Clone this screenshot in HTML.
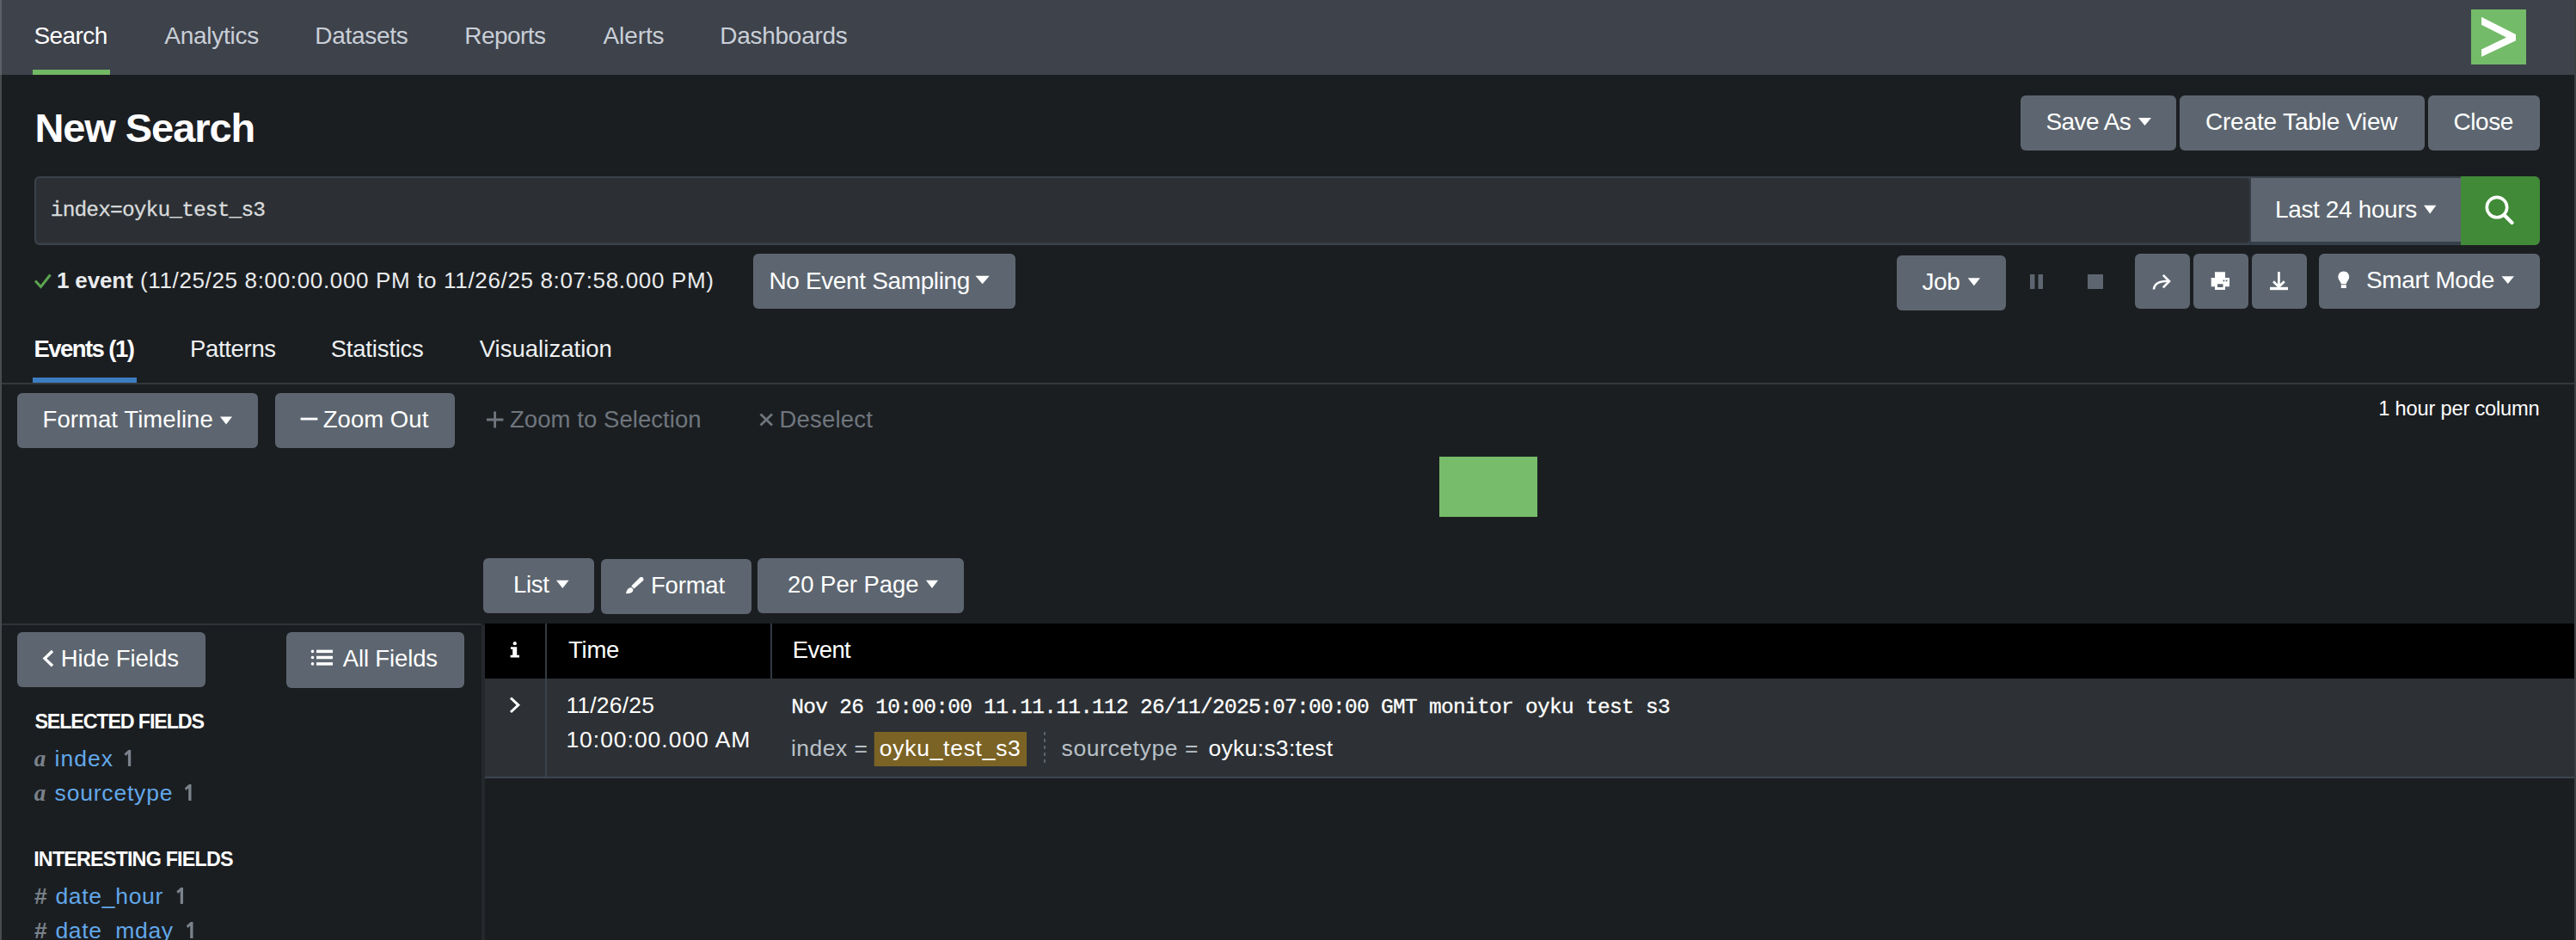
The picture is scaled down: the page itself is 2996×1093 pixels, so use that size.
<!DOCTYPE html>
<html><head><meta charset="utf-8"><title>New Search</title>
<style>html,body{margin:0;padding:0;width:2996px;height:1093px;overflow:hidden;background:#1b1e21;font-family:"Liberation Sans",sans-serif;}</style>
</head><body>
<svg width="2996" height="1093" viewBox="0 0 2996 1093" style="display:block"><rect x="0" y="0" width="2996" height="1093" fill="#1b1e21"/>
<rect x="0" y="0" width="2996" height="87" fill="#3e424b"/>
<rect x="0" y="0" width="2" height="87" fill="#5b6067"/>
<rect x="0" y="87" width="2" height="1006" fill="#474b4e"/>
<rect x="2994" y="0" width="2" height="1093" fill="#3d4043"/>
<text x="39.40" y="51" font-family="Liberation Sans" font-size="28" font-weight="400" fill="#ffffff" textLength="85.82" lengthAdjust="spacing" xml:space="preserve">Search</text>
<text x="191.20" y="51" font-family="Liberation Sans" font-size="28" font-weight="400" fill="#c9cfd7" textLength="110.05" lengthAdjust="spacing" xml:space="preserve">Analytics</text>
<text x="366.30" y="51" font-family="Liberation Sans" font-size="28" font-weight="400" fill="#c9cfd7" textLength="108.50" lengthAdjust="spacing" xml:space="preserve">Datasets</text>
<text x="540.30" y="51" font-family="Liberation Sans" font-size="28" font-weight="400" fill="#c9cfd7" textLength="94.75" lengthAdjust="spacing" xml:space="preserve">Reports</text>
<text x="701.40" y="51" font-family="Liberation Sans" font-size="28" font-weight="400" fill="#c9cfd7" textLength="71.18" lengthAdjust="spacing" xml:space="preserve">Alerts</text>
<text x="837.30" y="51" font-family="Liberation Sans" font-size="28" font-weight="400" fill="#c9cfd7" textLength="148.48" lengthAdjust="spacing" xml:space="preserve">Dashboards</text>
<rect x="38" y="81" width="90" height="6" fill="#72b965"/>
<rect x="2874" y="11" width="64" height="64" fill="#74bb69"/>
<path d="M2886,19.7 L2926,39.9 L2926,47.3 L2886,66 L2886,57.4 L2915,43.5 L2886,28.7 Z" fill="#fff"/>
<text x="40.40" y="165" font-family="Liberation Sans" font-size="47" font-weight="700" fill="#ffffff" textLength="256.87" lengthAdjust="spacing" xml:space="preserve">New Search</text>
<rect x="2350" y="111" width="181" height="64" fill="#5d6670" rx="6"/>
<text x="2379.50" y="151" font-family="Liberation Sans" font-size="28" font-weight="400" fill="#ffffff" textLength="99.23" lengthAdjust="spacing" xml:space="preserve">Save As</text>
<polygon points="2487,137 2502,137 2494.5,146" fill="#fff"/>
<rect x="2535" y="111" width="285" height="64" fill="#5d6670" rx="6"/>
<text x="2564.90" y="151" font-family="Liberation Sans" font-size="28" font-weight="400" fill="#ffffff" textLength="223.62" lengthAdjust="spacing" xml:space="preserve">Create Table View</text>
<rect x="2824" y="111" width="130" height="64" fill="#5d6670" rx="6"/>
<text x="2853.50" y="151" font-family="Liberation Sans" font-size="28" font-weight="400" fill="#ffffff" textLength="69.89" lengthAdjust="spacing" xml:space="preserve">Close</text>
<rect x="40" y="205" width="2914" height="80" fill="#39424a" rx="6"/>
<rect x="42" y="207" width="2574" height="75.5" fill="#2c3034" rx="4"/>
<rect x="2616" y="207" width="2" height="78" fill="#343b45"/>
<rect x="2618" y="281" width="244" height="4" fill="#36404a"/>
<rect x="2618" y="207" width="244" height="74" fill="#5d6670"/>
<path d="M2862,205 H2948 A6,6 0 0 1 2954,211 V279 A6,6 0 0 1 2948,285 H2862 Z" fill="#418a38"/>
<text x="58.80" y="251" font-family="Liberation Mono" font-size="24.5" font-weight="400" stroke="#d8dadc" stroke-width="0.3" fill="#d8dadc" textLength="250.16" lengthAdjust="spacing" xml:space="preserve">index=oyku_test_s3</text>
<text x="2646.00" y="253" font-family="Liberation Sans" font-size="28" font-weight="400" fill="#ffffff" textLength="165.27" lengthAdjust="spacing" xml:space="preserve">Last 24 hours</text>
<polygon points="2819,238.8 2833.4,238.8 2826.2,248.5" fill="#fff"/>
<circle cx="2904" cy="241.1" r="11.7" fill="none" stroke="#fff" stroke-width="3.6"/>
<path d="M2912.5,250 L2921.5,259" fill="none" stroke="#fff" stroke-width="4.2" stroke-linecap="round"/>
<path d="M41,326.5 L47.5,333.5 L58.5,319.5" fill="none" stroke="#5ba550" stroke-width="3"/>
<text x="65.90" y="335" font-family="Liberation Sans" font-size="26" font-weight="700" fill="#e9ebed" textLength="88.91" lengthAdjust="spacing" xml:space="preserve">1 event</text>
<text x="162.90" y="335" font-family="Liberation Sans" font-size="26" font-weight="400" fill="#e9ebed" textLength="667.01" lengthAdjust="spacing" xml:space="preserve">(11/25/25 8:00:00.000 PM to 11/26/25 8:07:58.000 PM)</text>
<rect x="876" y="295" width="305" height="64" fill="#5d6670" rx="6"/>
<text x="894.40" y="336" font-family="Liberation Sans" font-size="28" font-weight="400" fill="#ffffff" textLength="233.99" lengthAdjust="spacing" xml:space="preserve">No Event Sampling</text>
<polygon points="1134.5,320.8 1150.8,320.8 1142.65,330.3" fill="#fff"/>
<rect x="2206" y="297" width="127" height="64" fill="#5d6670" rx="6"/>
<text x="2235.50" y="337" font-family="Liberation Sans" font-size="28" font-weight="400" fill="#ffffff" textLength="44.26" lengthAdjust="spacing" xml:space="preserve">Job</text>
<polygon points="2288.7,323.3 2303,323.3 2295.85,332.2" fill="#fff"/>
<rect x="2361" y="319" width="5.5" height="17" fill="#5d6670"/>
<rect x="2370.5" y="319" width="5.5" height="17" fill="#5d6670"/>
<rect x="2428" y="319" width="18" height="17" fill="#5d6670"/>
<rect x="2483" y="295" width="64" height="64" fill="#5d6670" rx="6"/>
<path d="M2505,336.5 C2505.5,329.5 2511,326.8 2522,326.8" fill="none" stroke="#fff" stroke-width="2.6"/>
<path d="M2515.8,319.8 L2523,327 L2515.8,334.3" fill="none" stroke="#fff" stroke-width="2.6"/>
<rect x="2551" y="295" width="64" height="64" fill="#5d6670" rx="6"/>
<path d="M2576,316.2 H2588 V323 H2593 V333.2 H2588 V337 H2576 V333.2 H2571.7 V323 H2576 Z" fill="#fff"/>
<rect x="2579" y="330.2" width="6.5" height="3.8" fill="#5d6670"/>
<rect x="2585.5" y="325.5" width="1.8" height="1.8" fill="#5d6670"/>
<rect x="2588.6" y="325.5" width="1.8" height="1.8" fill="#5d6670"/>
<rect x="2619" y="295" width="64" height="64" fill="#5d6670" rx="6"/>
<path d="M2650.4,316 V333" fill="none" stroke="#fff" stroke-width="2.8"/>
<path d="M2644,327.3 L2650.4,333.6 L2656.8,327.3" fill="none" stroke="#fff" stroke-width="2.8"/>
<rect x="2640" y="333.8" width="21" height="3.4" fill="#fff"/>
<rect x="2697" y="295" width="257" height="64" fill="#5d6670" rx="6"/>
<path d="M2725.8,315.6 C2729.6,315.6 2732.2,318.4 2732.2,322 C2732.2,325.6 2729.4,327 2728.8,330.2 H2722.8 C2722.2,327 2719.4,325.6 2719.4,322 C2719.4,318.4 2722,315.6 2725.8,315.6 Z" fill="#fff"/>
<rect x="2722.8" y="331.2" width="6.0" height="3.8" fill="#fff"/>
<text x="2752.00" y="335" font-family="Liberation Sans" font-size="28" font-weight="400" fill="#ffffff" textLength="149.40" lengthAdjust="spacing" xml:space="preserve">Smart Mode</text>
<polygon points="2909.5,321.2 2924,321.2 2916.75,330.1" fill="#fff"/>
<text x="39.40" y="415" font-family="Liberation Sans" font-size="27.5" font-weight="700" fill="#ffffff" textLength="117.44" lengthAdjust="spacing" xml:space="preserve">Events (1)</text>
<text x="221.00" y="415" font-family="Liberation Sans" font-size="27.5" font-weight="400" fill="#eef0f2" textLength="100.12" lengthAdjust="spacing" xml:space="preserve">Patterns</text>
<text x="384.70" y="415" font-family="Liberation Sans" font-size="27.5" font-weight="400" fill="#eef0f2" textLength="108.13" lengthAdjust="spacing" xml:space="preserve">Statistics</text>
<text x="557.70" y="415" font-family="Liberation Sans" font-size="27.5" font-weight="400" fill="#eef0f2" textLength="154.21" lengthAdjust="spacing" xml:space="preserve">Visualization</text>
<rect x="2" y="445" width="2992" height="2" fill="#34383c"/>
<rect x="38" y="439" width="121" height="6" fill="#3c7dc2"/>
<rect x="20" y="457" width="280" height="64" fill="#5d6670" rx="6"/>
<text x="49.50" y="497" font-family="Liberation Sans" font-size="27.5" font-weight="400" fill="#ffffff" textLength="198.24" lengthAdjust="spacing" xml:space="preserve">Format Timeline</text>
<polygon points="256,484.5 270,484.5 263.0,493.5" fill="#fff"/>
<rect x="320" y="457" width="209" height="64" fill="#5d6670" rx="6"/>
<rect x="349.6" y="485.7" width="19.8" height="2.8" fill="#fff"/>
<text x="375.70" y="497" font-family="Liberation Sans" font-size="27.5" font-weight="400" fill="#ffffff" textLength="122.57" lengthAdjust="spacing" xml:space="preserve">Zoom Out</text>
<path d="M575.6,478.5 V497.5 M565.9,488 H585.4" fill="none" stroke="#6f767e" stroke-width="2.8"/>
<text x="593.00" y="497" font-family="Liberation Sans" font-size="27.5" font-weight="400" fill="#6f767e" textLength="222.64" lengthAdjust="spacing" xml:space="preserve">Zoom to Selection</text>
<path d="M884.5,481.5 L898,494.5 M898,481.5 L884.5,494.5" fill="none" stroke="#6f767e" stroke-width="2.8"/>
<text x="906.40" y="497" font-family="Liberation Sans" font-size="27.5" font-weight="400" fill="#6f767e" textLength="108.40" lengthAdjust="spacing" xml:space="preserve">Deselect</text>
<text x="2766.20" y="483" font-family="Liberation Sans" font-size="23.7" font-weight="400" fill="#ffffff" textLength="187.54" lengthAdjust="spacing" xml:space="preserve">1 hour per column</text>
<rect x="1674" y="531" width="114" height="70" fill="#76bc6a"/>
<rect x="562" y="649" width="129" height="64" fill="#5d6670" rx="6"/>
<text x="597.00" y="689" font-family="Liberation Sans" font-size="27.5" font-weight="400" fill="#ffffff" textLength="41.80" lengthAdjust="spacing" xml:space="preserve">List</text>
<polygon points="647,674.7 661.6,674.7 654.3,684" fill="#fff"/>
<rect x="699" y="650" width="175" height="64" fill="#5d6670" rx="6"/>
<path d="M744.2,671.6 C745.8,670.6 747.6,671.2 748.2,672.4 C748.8,673.6 748.4,674.8 747.6,675.6 L737.4,684.6 L734.2,681.6 Z" fill="#fff"/>
<path d="M728,690 C728.8,686.6 730.4,683.4 733.6,683.2 C736.2,683.2 737,686 735.8,687.8 C734.4,690 731,690.4 728,690 Z" fill="#fff"/>
<text x="757.00" y="690" font-family="Liberation Sans" font-size="27.5" font-weight="400" fill="#ffffff" textLength="86.09" lengthAdjust="spacing" xml:space="preserve">Format</text>
<rect x="881" y="649" width="240" height="64" fill="#5d6670" rx="6"/>
<text x="916.00" y="689" font-family="Liberation Sans" font-size="27.5" font-weight="400" fill="#ffffff" textLength="152.49" lengthAdjust="spacing" xml:space="preserve">20 Per Page</text>
<polygon points="1077,674.7 1091,674.7 1084.0,684" fill="#fff"/>
<rect x="2" y="725" width="558" height="2" fill="#2f3337"/>
<rect x="560" y="727" width="4" height="366" fill="#25292d"/>
<rect x="20" y="735" width="219" height="64" fill="#5d6670" rx="6"/>
<path d="M61,757 L52,765.6 L61,774.3" fill="none" stroke="#fff" stroke-width="3.4"/>
<text x="70.70" y="775" font-family="Liberation Sans" font-size="27.5" font-weight="400" fill="#ffffff" textLength="137.26" lengthAdjust="spacing" xml:space="preserve">Hide Fields</text>
<rect x="333" y="735" width="207" height="65" fill="#5d6670" rx="6"/>
<circle cx="363.5" cy="757.4" r="1.8" fill="#fff"/>
<rect x="368" y="755.65" width="19" height="3.5" fill="#fff"/>
<circle cx="363.5" cy="764.5" r="1.8" fill="#fff"/>
<rect x="368" y="762.75" width="19" height="3.5" fill="#fff"/>
<circle cx="363.5" cy="771.9" r="1.8" fill="#fff"/>
<rect x="368" y="770.15" width="19" height="3.5" fill="#fff"/>
<text x="398.70" y="775" font-family="Liberation Sans" font-size="27.5" font-weight="400" fill="#ffffff" textLength="110.36" lengthAdjust="spacing" xml:space="preserve">All Fields</text>
<text x="40.40" y="847" font-family="Liberation Sans" font-size="23.3" font-weight="700" fill="#ffffff" textLength="197.58" lengthAdjust="spacing" xml:space="preserve">SELECTED FIELDS</text>
<text x="39.70" y="890.5" font-family="Liberation Serif" font-size="27" font-weight="700" font-style="italic" fill="#7a828b" xml:space="preserve">a</text>
<text x="63.60" y="890.5" font-family="Liberation Sans" font-size="26.5" font-weight="400" fill="#62a8ea" textLength="67.46" lengthAdjust="spacing" xml:space="preserve">index</text>
<text x="39.70" y="930.6" font-family="Liberation Serif" font-size="27" font-weight="700" font-style="italic" fill="#7a828b" xml:space="preserve">a</text>
<text x="63.60" y="930.6" font-family="Liberation Sans" font-size="26.5" font-weight="400" fill="#62a8ea" textLength="136.84" lengthAdjust="spacing" xml:space="preserve">sourcetype</text>
<text x="39.20" y="1007.4" font-family="Liberation Sans" font-size="23.3" font-weight="700" fill="#ffffff" textLength="232.24" lengthAdjust="spacing" xml:space="preserve">INTERESTING FIELDS</text>
<text x="40.00" y="1051" font-family="Liberation Sans" font-size="26.5" font-weight="700" fill="#7a828b" xml:space="preserve">#</text>
<text x="64.40" y="1051" font-family="Liberation Sans" font-size="26.5" font-weight="400" fill="#62a8ea" textLength="124.96" lengthAdjust="spacing" xml:space="preserve">date_hour</text>
<text x="40.00" y="1091" font-family="Liberation Sans" font-size="26.5" font-weight="700" fill="#7a828b" xml:space="preserve">#</text>
<text x="64.40" y="1091" font-family="Liberation Sans" font-size="26.5" font-weight="400" fill="#62a8ea" textLength="136.72" lengthAdjust="spacing" xml:space="preserve">date_mday</text>
<path d="M152.2,871.9 V891 H148.89999999999998 V876.5 L146.29999999999998,879.0 L144.5,876.6 L149.5,871.9 Z" fill="#7a828b"/>
<path d="M222.5,911.9 V931 H219.2 V916.5 L216.6,919.0 L214.8,916.6 L219.8,911.9 Z" fill="#7a828b"/>
<path d="M213,1031.9 V1051 H209.7 V1036.5 L207.1,1039.0 L205.3,1036.6000000000001 L210.3,1031.9 Z" fill="#7a828b"/>
<path d="M224.5,1071.9 V1091 H221.2 V1076.5 L218.6,1079.0 L216.8,1076.6000000000001 L221.8,1071.9 Z" fill="#7a828b"/>
<rect x="564" y="725" width="2430" height="64" fill="#000"/>
<rect x="634" y="725" width="2" height="64" fill="#313a43"/>
<rect x="896" y="725" width="2" height="64" fill="#313a43"/>
<rect x="564" y="789" width="2430" height="114" fill="#2d3135"/>
<rect x="634" y="789" width="2" height="114" fill="#38434d"/>
<rect x="564" y="903" width="2430" height="2" fill="#3b4650"/>
<circle cx="598.8" cy="748.2" r="2.1" fill="#fff"/>
<path d="M594,752.3 H601.2 V761.8 H604 V764.6 H593.6 V761.8 H596.2 V755 H594 Z" fill="#fff"/>
<text x="661.00" y="765" font-family="Liberation Sans" font-size="27.5" font-weight="400" fill="#ffffff" textLength="59.39" lengthAdjust="spacing" xml:space="preserve">Time</text>
<text x="921.80" y="765" font-family="Liberation Sans" font-size="27.5" font-weight="400" fill="#ffffff" textLength="67.93" lengthAdjust="spacing" xml:space="preserve">Event</text>
<path d="M594,811.5 L602.8,819.8 L594,828" fill="none" stroke="#fff" stroke-width="3"/>
<text x="658.40" y="829" font-family="Liberation Sans" font-size="26.5" font-weight="400" fill="#ffffff" textLength="102.49" lengthAdjust="spacing" xml:space="preserve">11/26/25</text>
<text x="658.40" y="869" font-family="Liberation Sans" font-size="26.5" font-weight="400" fill="#ffffff" textLength="213.99" lengthAdjust="spacing" xml:space="preserve">10:00:00.000 AM</text>
<text x="920.20" y="829" font-family="Liberation Mono" font-size="24.5" font-weight="400" stroke="#ffffff" stroke-width="0.3" fill="#ffffff" textLength="1022.48" lengthAdjust="spacing" xml:space="preserve">Nov 26 10:00:00 11.11.11.112 26/11/2025:07:00:00 GMT monitor oyku test s3</text>
<rect x="1016.8" y="851" width="177.2" height="40" fill="#7b6325"/>
<text x="920.00" y="879" font-family="Liberation Sans" font-size="26.5" font-weight="400" fill="#b9c0c7" textLength="88.90" lengthAdjust="spacing" xml:space="preserve">index =</text>
<text x="1022.80" y="879" font-family="Liberation Sans" font-size="26.5" font-weight="400" fill="#ffffff" textLength="164.06" lengthAdjust="spacing" xml:space="preserve">oyku_test_s3</text>
<line x1="1215" y1="851" x2="1215" y2="891" stroke="#5a636b" stroke-width="2" stroke-dasharray="4,4"/>
<text x="1234.60" y="879" font-family="Liberation Sans" font-size="26.5" font-weight="400" fill="#b9c0c7" textLength="158.87" lengthAdjust="spacing" xml:space="preserve">sourcetype =</text>
<text x="1405.40" y="879" font-family="Liberation Sans" font-size="26.5" font-weight="400" fill="#ffffff" textLength="144.81" lengthAdjust="spacing" xml:space="preserve">oyku:s3:test</text></svg>
</body></html>
